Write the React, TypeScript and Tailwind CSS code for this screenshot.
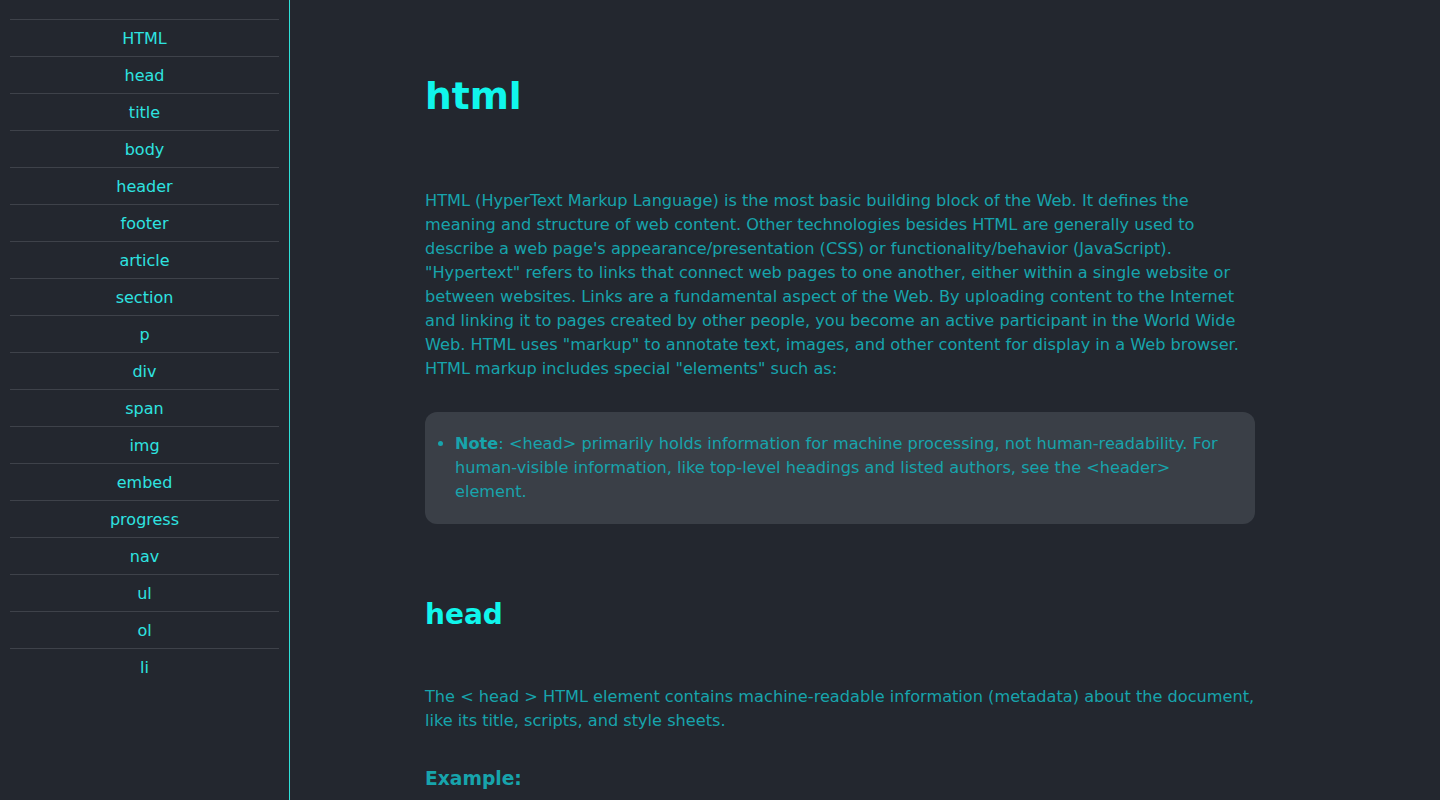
const NAV = [
  "HTML", "head", "title", "body", "header", "footer", "article", "section",
  "p", "div", "span", "img", "embed", "progress", "nav", "ul", "ol", "li",
];

export default function App() {
  return (
    <div className="flex h-[800px] overflow-hidden bg-[#23272f] font-['DejaVu_Sans',Verdana,sans-serif]">
      {/* Sidebar */}
      <aside className="w-[290px] shrink-0 shadow-[inset_-1px_0_0_#2fe0d8] pt-[19px] pl-[10px] pr-[11px]">
        <ul>
          {NAV.map((item) => (
            <li
              key={item}
              className="h-[37px] border-t border-[#3e424a] flex items-center justify-center pt-[2px] text-base text-[#2ee3e0]"
            >
              {item}
            </li>
          ))}
        </ul>
      </aside>

      {/* Main content */}
      <main className="flex-1 pl-[135px] pt-[72px]">
        <div className="w-[830px] text-[16.17px] leading-6 text-[#17a4ac]">
          <h1 className="text-[37.6px] leading-[48px] font-bold text-[#10f6ec]">html</h1>
          <p className="mt-[69px]">
            HTML (HyperText Markup Language) is the most basic building block of the Web. It defines the
            meaning and structure of web content. Other technologies besides HTML are generally used to
            describe a web page's appearance/presentation (CSS) or functionality/behavior (JavaScript).
            "Hypertext" refers to links that connect web pages to one another, either within a single website or
            between websites. Links are a fundamental aspect of the Web. By uploading content to the Internet
            and linking it to pages created by other people, you become an active participant in the World Wide
            Web. HTML uses "markup" to annotate text, images, and other content for display in a Web browser.
            HTML markup includes special "elements" such as:
          </p>

          <div className="mt-[31px] rounded-xl bg-[#3a3f47] py-5 pr-5">
            <ul className="list-disc pl-[30px]">
              <li>
                <strong className="font-bold">Note</strong>: &lt;head&gt; primarily holds information for machine processing, not human-readability. For
                human-visible information, like top-level headings and listed authors, see the &lt;header&gt;
                element.
              </li>
            </ul>
          </div>

          <h2 className="mt-[72px] text-[28px] leading-[38px] font-bold text-[#10f6ec]">head</h2>
          <p className="mt-[51px]">
            The &lt; head &gt; HTML element contains machine-readable information (metadata) about the document,
            like its title, scripts, and style sheets.
          </p>
          <h3 className="mt-[34px] text-[18.7px] leading-6 font-bold">Example:</h3>
        </div>
      </main>
    </div>
  );
}
